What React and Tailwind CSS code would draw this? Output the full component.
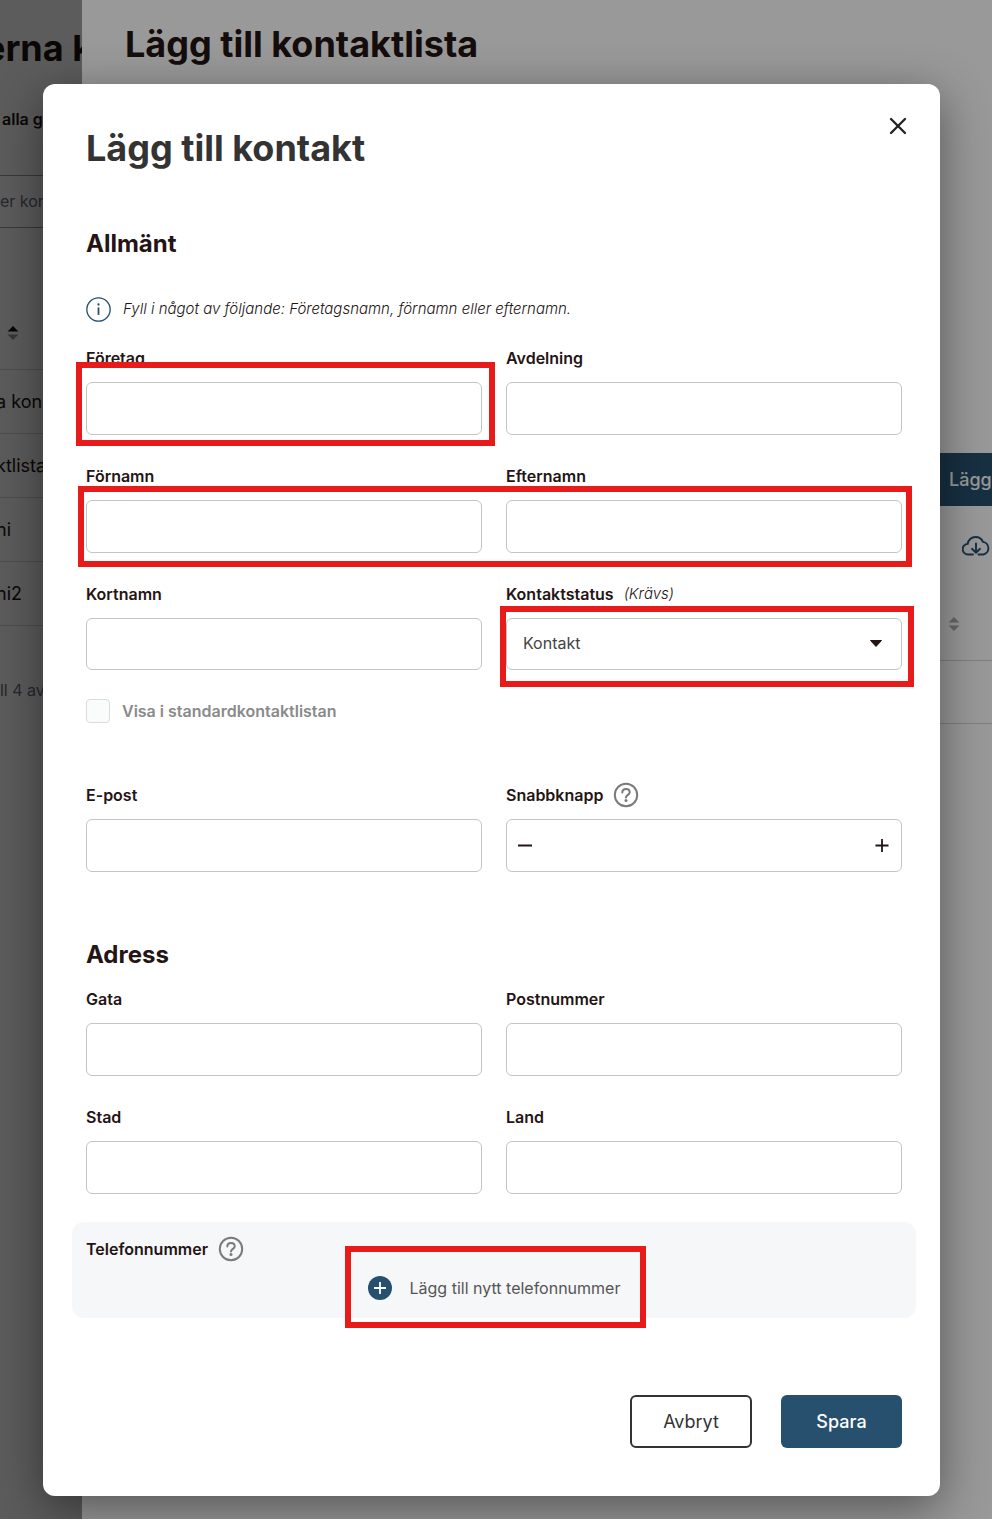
import React, { useState } from 'react';
import { X } from 'lucide-react';

const inputClass = 'block w-full px-4 bg-white border border-[#c4c4c4] rounded-md text-base text-[#444]';

const SortIcon = ({ up, down }) => (
  <svg width="12" height="16" viewBox="0 0 12 16">
    <path d="M6 1l5.4 5.5H.6z" fill={up} />
    <path d="M6 15L.6 9.5h10.8z" fill={down} />
  </svg>
);

const HelpIcon = () => (
  <svg width="26" height="26" viewBox="0 0 26 26" fill="none" stroke="#7a7a7a" strokeWidth="2" strokeLinecap="round">
    <circle cx="13" cy="13" r="11.2" />
    <path d="M9.3 10.6c0-2.1 1.6-3.5 3.7-3.5s3.7 1.4 3.7 3.3c0 2.3-3.7 2.7-3.7 5" />
    <circle cx="13" cy="18.6" r="1.5" fill="#7a7a7a" stroke="none" />
  </svg>
);

const InfoIcon = () => (
  <svg width="25" height="25" viewBox="0 0 24 24" fill="none" stroke="#27506e">
    <circle cx="12" cy="12" r="11.2" strokeWidth="1.3" />
    <path d="M12 10v7.200" strokeWidth="1.7" />
    <circle cx="12" cy="7.2" r="1.1" fill="#27506e" stroke="none" />
  </svg>
);

const CloudIcon = () => (
  <svg width="28" height="20" viewBox="0 0 28 20" fill="none" stroke="#27506e" strokeWidth="1.9" strokeLinecap="round" strokeLinejoin="round">
    <path d="M11 18.5H6.3a5.3 5.3 0 0 1-.6-10.6C6 4.100 9.400 1 13.600 1c3.300 0 6.200 2 7.300 4.900a6.400 6.400 0 0 1 .4 12.600H16.500" />
    <path d="M14 7.500v9M10 12.800l4 3.900 4-3.900" />
  </svg>
);

// Red frame that points out what the guide talks about
const Marker = ({ className }) => <span aria-hidden="true" className={`absolute pointer-events-none border-6 border-[#e81b1b] ${className}`} />;

function Field({ id, label, extra, children, marker }) {
  return (
    <div>
      <div className="flex items-center h-6 mb-3">
        <label htmlFor={id} className="text-base font-semibold text-[#241414]">{label}</label>
        {extra}
      </div>
      <div className="relative">
        {children || <input id={id} type="text" className={`${inputClass} h-[53px]`} />}
        {marker && <Marker className={marker} />}
      </div>
    </div>
  );
}

function ListPage() {
  return (
    <div className="col-start-1 row-start-1 bg-white text-[#241414] overflow-hidden whitespace-nowrap">
      <h1 className="-ml-4 pt-6 text-4xl leading-12 font-bold">erna k</h1>
      <p className="mt-[35px] pl-0.5 text-base font-semibold">alla g</p>
      <div className="mt-11 flex items-center h-[53px] pb-0.5 border-y border-gray-400 text-base text-gray-500">er kor</div>
      <div className="flex items-center h-[142px] pt-[69px] pl-[7px] border-b border-gray-300"><SortIcon up="#111" down="#999" /></div>
      {['a kon', 'ktlista', 'ni', 'ni2'].map(name => (
        <div key={name} className="-ml-1 flex items-center h-16 border-b border-gray-300 text-lg">{name}</div>
      ))}
      <p className="-ml-1 mt-13 text-base text-gray-500">ill 4 av</p>
    </div>
  );
}

function ListDrawer() {
  return (
    <div className="col-start-1 row-start-1 ml-[82px] bg-white text-[#241414]">
      <h2 className="pt-5 pl-[43px] text-4xl leading-12 font-bold">Lägg till kontaktlista</h2>
      <div className="mt-[385px] flex flex-col items-end">
        <button className="h-[53px] w-[70px] pl-[27px] bg-[#27506e] text-white text-lg font-medium text-left">Lägg</button>
        <button aria-label="Ladda ner" className="mt-[30px] mr-0.5"><CloudIcon /></button>
        <div className="mt-[60px] pr-8"><SortIcon up="#aaa" down="#aaa" /></div>
      </div>
      <div className="mt-7 h-16 border-y border-gray-300" />
    </div>
  );
}

export default function App() {
  const [status, setStatus] = useState('Kontakt');
  const [quickKey, setQuickKey] = useState('');

  return (
    <div className="grid min-h-screen overflow-hidden font-[Inter,sans-serif]">
      <ListPage />
      <div className="col-start-1 row-start-1 bg-black/40" />
      <ListDrawer />
      <div className="col-start-1 row-start-1 bg-black/40" />

      <div role="dialog" aria-labelledby="dialog-title" className="col-start-1 row-start-1 relative mt-[84px] mb-[23px] ml-[43px] mr-[52px] pt-10 pb-12 pl-[43px] pr-[38px] bg-white rounded-xl shadow-[0_12px_48px_rgba(0,0,0,0.45)]">
        <div className="flex items-start justify-between">
          <h2 id="dialog-title" className="text-4xl leading-12 font-bold text-[#333]">Lägg till kontakt</h2>
          <button aria-label="Stäng" className="-mt-3 -mr-2.5 text-[#222]"><X size={28} strokeWidth={2} /></button>
        </div>

        <form onSubmit={e => e.preventDefault()}>
          <h3 className="mt-14 text-2xl font-bold text-[#241414]">Allmänt</h3>
          <p className="mt-[37px] h-[25px] flex items-center gap-3 text-[15px] font-light italic text-[#241414]"><InfoIcon /> Fyll i något av följande: Företagsnamn, förnamn eller efternamn.</p>

          <div className="mt-6 grid grid-cols-2 gap-x-6 gap-y-[29px]">
            <Field id="company" label="Företag" marker="-top-5 -bottom-[11px] -left-2.5 -right-[13px]" />
            <Field id="department" label="Avdelning" />
            <div className="relative col-span-2 grid grid-cols-2 gap-x-6">
              <Field id="firstname" label="Förnamn" />
              <Field id="lastname" label="Efternamn" />
              <Marker className="top-[22px] -bottom-3.5 -left-2 -right-2.5" />
            </div>
            <Field id="shortname" label="Kortnamn">
              <input id="shortname" type="text" className={`${inputClass} h-13`} />
            </Field>
            <Field id="status" label="Kontaktstatus" extra={<span className="ml-2.5 text-[15px] font-light italic text-[#241414]">(Krävs)</span>} marker="-top-3 -bottom-[17px] -left-1.5 -right-3">
              <select id="status" value={status} onChange={e => setStatus(e.target.value)} className={`${inputClass} h-13 pb-0.5 appearance-none`}>
                <option>Kontakt</option>
              </select>
              <svg className="absolute top-[22px] right-5 pointer-events-none" width="12" height="7" viewBox="0 0 12 7"><path d="M.5 .500h11L6 6.500z" fill="#241414" stroke="#241414" strokeLinejoin="round" /></svg>
            </Field>
          </div>

          <label className="mt-[29px] flex items-center gap-3 text-base font-semibold text-[#8a8a8a]">
            <input type="checkbox" disabled className="appearance-none size-6 bg-[#fafcfc] border border-[#d9dcdc] rounded-sm" />
            Visa i standardkontaktlistan
          </label>

          <div className="mt-15 grid grid-cols-2 gap-x-6">
            <Field id="email" label="E-post" />
            <Field id="quickkey" label="Snabbknapp" extra={<button type="button" aria-label="Hjälp om snabbknapp" className="ml-2.5"><HelpIcon /></button>}>
              <div className="flex items-center h-[53px] pl-[11px] pr-3 border border-[#c4c4c4] rounded-md">
                <button type="button" aria-label="Minska" onClick={() => setQuickKey(k => Math.max(0, Number(k) - 1))}>
                  <svg width="14" height="14" viewBox="0 0 14 14"><path d="M0 6.500h14" stroke="#241414" strokeWidth="2" /></svg>
                </button>
                <input id="quickkey" type="text" value={quickKey} onChange={e => setQuickKey(e.target.value)} className="flex-1 min-w-0 px-3 text-base outline-none" />
                <button type="button" aria-label="Öka" onClick={() => setQuickKey(k => Number(k) + 1)}>
                  <svg width="14" height="14" viewBox="0 0 14 14"><path d="M.5 6.500h13M7 0v13" stroke="#241414" strokeWidth="1.800" /></svg>
                </button>
              </div>
            </Field>
          </div>

          <h3 className="mt-[67px] mb-4 text-2xl font-bold text-[#241414]">Adress</h3>
          <div className="grid grid-cols-2 gap-x-6 gap-y-[29px]">
            <Field id="street" label="Gata" />
            <Field id="zip" label="Postnummer" />
            <Field id="city" label="Stad" />
            <Field id="country" label="Land" />
          </div>

          <div className="mt-7 -mx-3.5 px-3.5 pt-3.5 pb-[18px] bg-[#f5f7f9] rounded-xl">
            <div className="flex items-center gap-2.5 text-base font-semibold text-[#241414]">
              Telefonnummer
              <button type="button" aria-label="Hjälp om telefonnummer"><HelpIcon /></button>
            </div>
            <button type="button" className="relative mt-3.5 mx-auto flex items-center gap-[18px] text-base text-[#555]">
              <svg width="24" height="24" viewBox="0 0 24 24"><circle cx="12" cy="12" r="12" fill="#27506e" /><path d="M6 12h12M12 6v12" stroke="#fff" strokeWidth="1.800" /></svg>
              Lägg till nytt telefonnummer
              <Marker className="-top-[30px] -bottom-7 -left-[23px] -right-[26px]" />
            </button>
          </div>

          <div className="mt-[77px] flex justify-end gap-[29px]">
            <button type="button" className="h-[53px] w-[122px] border-2 border-[#333] rounded-md text-lg text-[#333]">Avbryt</button>
            <button type="submit" className="h-[53px] w-[121px] bg-[#27506e] rounded-md text-lg font-medium text-white">Spara</button>
          </div>
        </form>
      </div>
    </div>
  );
}
